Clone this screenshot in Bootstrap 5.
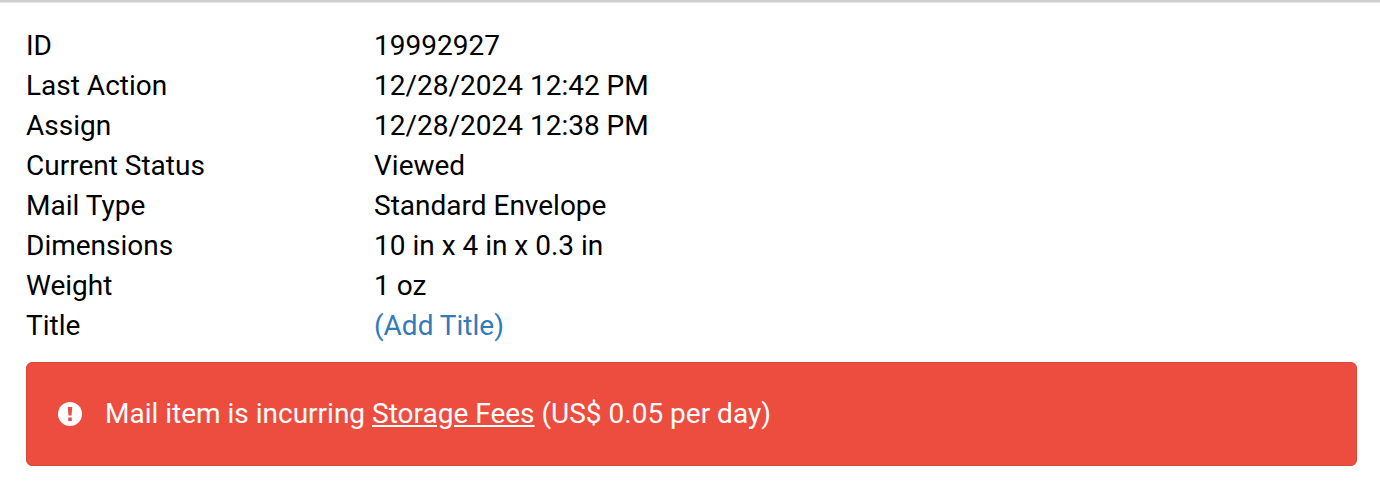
<!DOCTYPE html>
<html lang="en">
  <head>
    <meta charset="UTF-8" />
    <title>Mail item</title>
    <link href="https://cdn.jsdelivr.net/npm/bootstrap@5.3.0/dist/css/bootstrap.min.css" rel="stylesheet" />
    <style>
      body {
        background: #fff;
        color: #000;
        font-family: Roboto, sans-serif;
        font-size: 28px;
      }
      .top-rule {
        height: 3px;
        background: #cfcfcf;
        border-bottom: 1px solid #e6e6e6;
      }
      .info-wrap {
        padding: 23px 23px 0 26px;
      }
      .info-row {
        height: 40px;
        line-height: 40px;
      }
      .info-label {
        width: 348px;
      }
      .info-row a {
        color: #337ab7;
        text-decoration: none;
      }
      .fee-alert {
        height: 104px;
        margin-top: 16px;
        padding: 0 0 1px 31px;
        background: #ed4d3f;
        border: 1px solid #d9463a;
        border-radius: 6px;
        color: #fff;
        gap: 23px;
      }
      .fee-alert a {
        color: #fff;
      }
    </style>
  </head>
  <body>
    <div class="top-rule"></div>
    <div class="info-wrap">
      <div class="d-flex info-row"><div class="info-label">ID</div><div>19992927</div></div>
      <div class="d-flex info-row"><div class="info-label">Last Action</div><div>12/28/2024 12:42 PM</div></div>
      <div class="d-flex info-row"><div class="info-label">Assign</div><div>12/28/2024 12:38 PM</div></div>
      <div class="d-flex info-row"><div class="info-label">Current Status</div><div>Viewed</div></div>
      <div class="d-flex info-row"><div class="info-label">Mail Type</div><div>Standard Envelope</div></div>
      <div class="d-flex info-row"><div class="info-label">Dimensions</div><div>10 in x 4 in x 0.3 in</div></div>
      <div class="d-flex info-row"><div class="info-label">Weight</div><div>1 oz</div></div>
      <div class="d-flex info-row"><div class="info-label">Title</div><div><a href="#">(Add Title)</a></div></div>
      <div class="fee-alert d-flex align-items-center">
        <svg width="24" height="24" viewBox="0 0 24 24" aria-hidden="true">
          <circle cx="12" cy="12" r="12" fill="#fff" />
          <path d="M9.8 5h4.4l-.6 8.5h-3.2z" fill="#ed4d3f" />
          <rect x="10.2" y="15.5" width="3.6" height="3.6" fill="#ed4d3f" />
        </svg>
        <div>Mail item is incurring <a href="#">Storage Fees</a> (US$ 0.05 per day)</div>
      </div>
    </div>
  </body>
</html>
